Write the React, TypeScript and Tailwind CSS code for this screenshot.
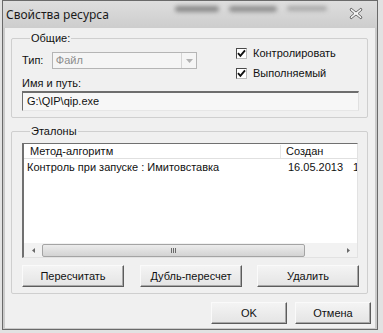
import React from "react";

function CheckBox({ label }: { label: string }) {
  return (
    <div className="flex items-center h-[13px]">
      <span className="w-[11px] h-[11px] bg-white border border-[#4a4a4a] border-r-[#bdbdbd] border-b-[#bdbdbd] flex items-center justify-center">
        <svg width="9" height="9" viewBox="0 0 9 9">
          <path d="M1 4.2 L3.4 6.8 L8 1.4" stroke="#111" strokeWidth="1.9" fill="none" />
        </svg>
      </span>
      <span className="ml-[6px] text-[#111]">{label}</span>
    </div>
  );
}

function Btn({ label, className }: { label: string; className: string }) {
  return (
    <div
      className={
        "h-[22px] flex items-center justify-center text-[#111] bg-gradient-to-b from-[#f4f4f4] to-[#e4e4e4] border border-t-[#fafafa] border-l-[#fafafa] border-r-[#5c5c5c] border-b-[#5c5c5c] shadow-[inset_-1px_-1px_0_#a8a8a8] " +
        className
      }
    >
      {label}
    </div>
  );
}

export default function App() {
  return (
    <div className="w-[383px] h-[333px] bg-[#e2e2e2] overflow-hidden font-['Liberation_Sans',Arial,sans-serif] text-[11px] leading-[13px]">
      <div className="ml-[2px] w-[376px] h-[330px] border border-[#6a6a6a] bg-[#cbcbcb] flex flex-col">
        {/* title bar */}
        <div className="h-[27px] flex items-center bg-gradient-to-b from-[#dedede] to-[#cdcdcd]">
          <span className="ml-[3px] font-['Noto_Sans',sans-serif] text-[12px] text-[#1a1a1a]">Свойства ресурса</span>
          <div className="ml-[66px] mb-[12px] flex items-center gap-[10px]">
            <span className="w-[44px] h-[6px] rounded-full bg-[#8a8a8a] blur-[2px]" />
            <span className="w-[48px] h-[6px] rounded-full bg-[#909090] blur-[2px]" />
            <span className="w-[40px] h-[5px] rounded-full bg-[#a8a8a8] blur-[2px]" />
          </div>
          <svg className="ml-auto mr-[14px] mb-[2px]" width="14" height="13" viewBox="0 0 14 13">
            <path
              d="M2 1 L7 5 L12 1 L13 3 L9 6.5 L13 10 L12 12 L7 8 L2 12 L1 10 L5 6.5 L1 3 Z"
              fill="#f4f4f4"
              stroke="#6b6b6b"
              strokeWidth="1"
              strokeLinejoin="round"
            />
          </svg>
        </div>

        {/* client area */}
        <div className="mx-[2px] h-[300px] bg-[#f0f0f0] flex flex-col">
          {/* Общие */}
          <div className="mt-[10px] ml-[6px] mr-[7px] border border-[#cfcfcf] rounded-[2px] pl-[10px] pr-[8px] pb-[6px]">
            <div className="-mt-[7px] ml-[8px] px-[1px] w-fit bg-[#f0f0f0] text-[#111]">Общие:</div>
            <div className="flex">
              <div className="w-[175px] flex flex-col">
                <div className="mt-[7px] flex items-center">
                  <span className="w-[30px] text-[#111]">Тип:</span>
                  <div className="w-[146px] h-[17px] border border-[#b5b5b5] bg-[#f5f5f5] flex items-center">
                    <span className="pl-[3px] flex-1 text-[#8d8d8d]">Файл</span>
                    <span className="w-[15px] h-[15px] border-l border-[#d4d4d4] flex items-center justify-center">
                      <svg width="7" height="4" viewBox="0 0 7 4">
                        <path d="M0 0 H7 L3.5 4 Z" fill="#b2b2b2" />
                      </svg>
                    </span>
                  </div>
                </div>
                <div className="mt-[8px] text-[#111]">Имя и путь:</div>
              </div>
              <div className="ml-[39px] mt-[2px] flex flex-col gap-[7px]">
                <CheckBox label="Контролировать" />
                <CheckBox label="Выполняемый" />
              </div>
            </div>
            <div className="mt-[1px] h-[20px] bg-[#f7f7f7] border-t-2 border-l border-[#6e6e6e] border-b border-b-[#e6e6e6] border-r border-r-[#e0e0e0] flex items-center pl-[4px] text-[#111]">
              G:\QIP\qip.exe
            </div>
          </div>

          {/* Эталоны */}
          <div className="mt-[13px] ml-[6px] mr-[7px] border border-[#cfcfcf] rounded-[2px] pl-[10px] pb-[6px]">
            <div className="-mt-[7px] ml-[8px] px-[1px] w-fit bg-[#f0f0f0] text-[#111]">Эталоны</div>
            <div className="mt-[5px] w-[336px] h-[115px] bg-white border-t border-l-2 border-[#707070] border-r border-r-[#e2e2e2] border-b border-b-[#e2e2e2] flex flex-col overflow-hidden">
              <div className="h-[15px] flex items-center border-b border-[#e0e0e0] whitespace-nowrap">
                <span className="w-[257px] pl-[6px] border-r border-[#e6e6e6] text-[#111]">Метод-алгоритм</span>
                <span className="pl-[5px] text-[#111]">Создан</span>
              </div>
              <div className="h-[17px] flex items-center whitespace-nowrap text-[#111]">
                <span className="w-[264px] shrink-0 pl-[3px]">Контроль при запуске : Имитовставка</span>
                <span className="w-[65px] shrink-0">16.05.2013</span>
                <span className="shrink-0">1</span>
              </div>
              <div className="mt-auto h-[14px] flex items-center bg-[#f2f2f2]">
                <span className="w-[18px] flex justify-center">
                  <svg width="3" height="5" viewBox="0 0 3 5">
                    <path d="M3 0 V5 L0 2.5 Z" fill="#6a6a6a" />
                  </svg>
                </span>
                <div className="w-[263px] h-[13px] rounded-[2px] border border-[#a4a4a4] bg-gradient-to-b from-[#ececec] to-[#d3d3d3] flex items-center justify-center gap-[1px]">
                  <span className="w-[1px] h-[5px] bg-[#6a6a6a]" />
                  <span className="w-[1px] h-[5px] bg-[#6a6a6a]" />
                  <span className="w-[1px] h-[5px] bg-[#6a6a6a]" />
                </div>
                <span className="ml-auto w-[18px] flex justify-center">
                  <svg width="3" height="5" viewBox="0 0 3 5">
                    <path d="M0 0 V5 L3 2.5 Z" fill="#6a6a6a" />
                  </svg>
                </span>
              </div>
            </div>
            <div className="mt-[7px] flex">
              <Btn label="Пересчитать" className="w-[102px]" />
              <Btn label="Дубль-пересчет" className="w-[102px] ml-[16px]" />
              <Btn label="Удалить" className="w-[102px] ml-[15px]" />
            </div>
          </div>

          {/* OK / Отмена */}
          <div className="mt-[8px] pr-[4px] flex justify-end gap-[8px]">
            <Btn label="OK" className="w-[76px]" />
            <Btn label="Отмена" className="w-[76px]" />
          </div>
        </div>
      </div>
    </div>
  );
}
